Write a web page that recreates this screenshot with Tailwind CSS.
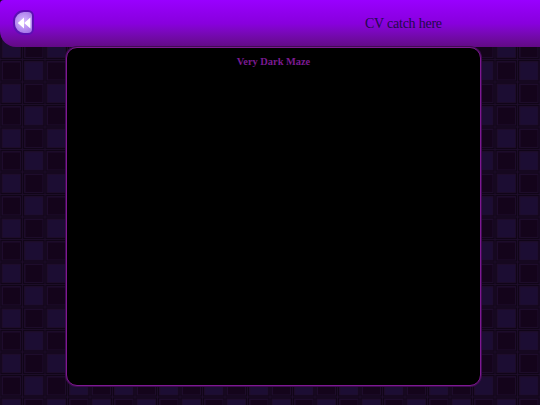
<!DOCTYPE html>
<html lang="en">
  <head>
    <meta charset="UTF-8" />
    <title>Very Dark Maze</title>
    <script src="https://cdn.jsdelivr.net/npm/@tailwindcss/browser@4"></script>
  </head>
  <body class="bg-[#170a24] font-['Liberation_Serif',serif]">
    <div class="relative w-[540px] h-[405px] overflow-hidden">
      <!-- tiled backdrop -->
      <svg class="absolute inset-0" width="540" height="405">
        <defs>
          <pattern id="maze" x="0" y="-8" width="45" height="45" patternUnits="userSpaceOnUse">
            <rect width="45" height="45" fill="#1e0c2c" />
            <g fill="none" stroke="#100517" stroke-width="1.2">
              <rect x="1" y="1" width="20.5" height="20.5" />
              <rect x="23.5" y="1" width="20.5" height="20.5" />
              <rect x="1" y="23.5" width="20.5" height="20.5" />
              <rect x="23.5" y="23.5" width="20.5" height="20.5" />
            </g>
            <rect x="3" y="3" width="17" height="17" fill="#1c0d33" />
            <rect x="25.5" y="3" width="17" height="17" fill="#14041b" />
            <rect x="3" y="25.5" width="17" height="17" fill="#14041b" />
            <rect x="25.5" y="25.5" width="17" height="17" fill="#1c0d33" />
          </pattern>
        </defs>
        <rect width="540" height="405" fill="url(#maze)" />
      </svg>

      <div class="relative">
        <!-- top bar -->
        <div class="h-[47px] rounded-bl-[16px] rounded-tl-[4px] bg-gradient-to-b from-[#9900ff] via-[#8800dd] via-50% to-[#620a84] flex items-center">
          <button class="ml-[13px] mt-[-2px] w-[21px] h-[25px] rounded-l-[11px] rounded-r-[6px] border-2 border-[#5c10b4] bg-[radial-gradient(circle_at_50%_45%,#d8bcff,#9a68e4)] flex items-center justify-center">
            <svg class="shrink-0" width="14" height="14" viewBox="0 0 14 14">
              <path d="M7 1.5 L0.8 7 L7 12.5 Z M13.4 1.5 L7.2 7 L13.4 12.5 Z" fill="#ffffff" />
            </svg>
          </button>
          <div class="ml-[331px] mt-[-1px] text-[14px] tracking-[-0.23px] text-[#1f0a4a]">CV catch here</div>
        </div>

        <!-- maze panel -->
        <div class="ml-[66px] w-[415px] h-[339px] bg-black border border-[#7e1892] shadow-[0_0_0_1px_#3f0d52] rounded-[11px]">
          <h1 class="mt-[7px] text-center text-[10.4px] leading-[14px] font-bold text-[#7a1a90]">Very Dark Maze</h1>
        </div>
      </div>
    </div>
  </body>
</html>
